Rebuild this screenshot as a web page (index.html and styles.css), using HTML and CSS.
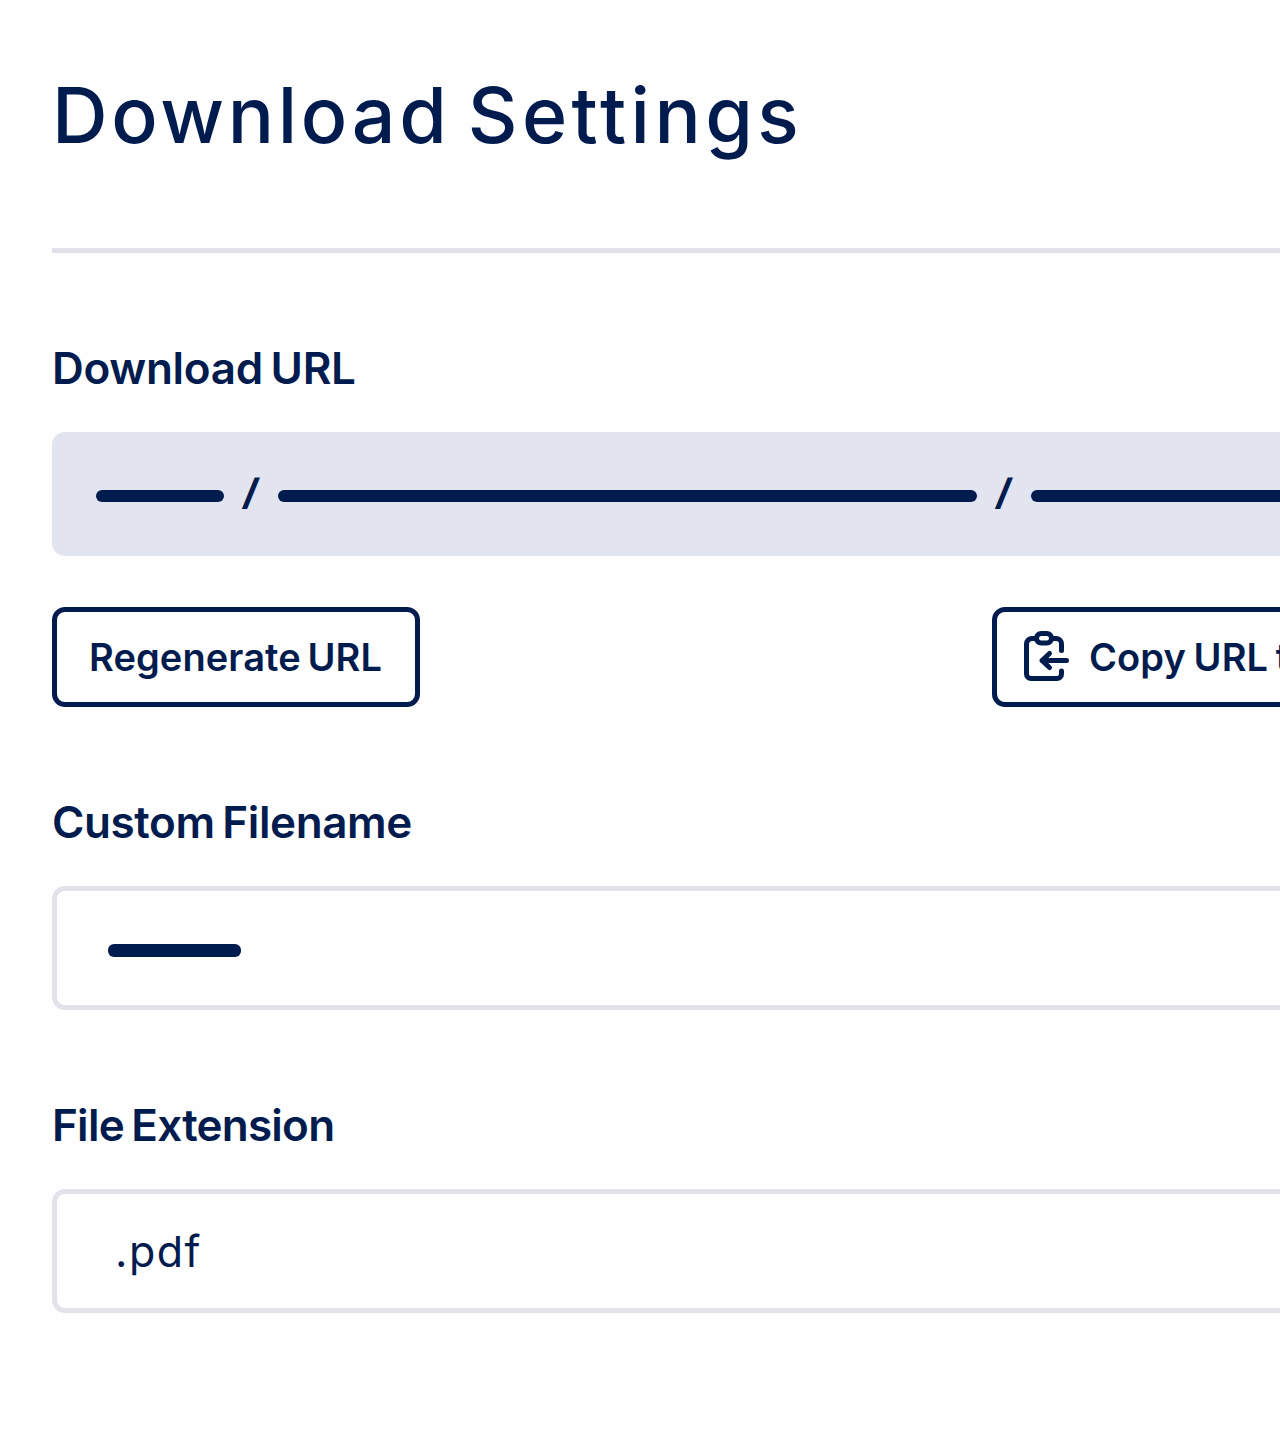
FILE: index.html
```
<!DOCTYPE html>
<html lang="en">
<head>
    <meta charset="UTF-8">
    <meta name="viewport" content="width=device-width, initial-scale=1.0">
    <title>Download Settings</title>
    <link rel="stylesheet" href="styles.css">
</head>
<body>

    <main class="settings">
        <h1 class="title"><span>Download</span> <span class="title-second">Settings</span></h1>

        <section class="field">
            <h2 class="label label-url">Download URL</h2>
            <div class="box box-filled">
                <span class="bar bar-host"></span>
                <span class="slash">/</span>
                <span class="bar bar-path"></span>
                <span class="slash">/</span>
                <span class="bar bar-file"></span>
            </div>
            <div class="actions">
                <button class="button button-regenerate" type="button">Regenerate URL</button>
                <button class="button button-copy" type="button">
                    <svg class="icon" width="50" height="56" viewBox="0 0 50 56">
                        <!-- Clipboard -->
                        <path d="M14.5 9.5H10A5.5 5.5 0 0 0 4.5 15v30a4.500 4.500 0 0 0 4.500 4.500h26a4.500 4.500 0 0 0 4.500-4.500v-3M39.500 21.500v-6.500A5.500 5.500 0 0 0 34 9.500h-4.500" />
                        <rect x="14.5" y="4.500" width="15" height="9.500" rx="4.750" />
                        <!-- Arrow -->
                        <path d="M44.500 31.500H20M27.500 24.500l-7.500 7 7.500 7" />
                    </svg>
                    <span>Copy URL to Clipboard</span>
                </button>
            </div>
        </section>

        <section class="field">
            <h2 class="label label-name">Custom Filename</h2>
            <div class="box">
                <span class="bar bar-name"></span>
            </div>
        </section>

        <section class="field">
            <h2 class="label label-extension">File Extension</h2>
            <div class="box box-extension">.pdf</div>
        </section>
    </main>

</body>
</html>
```
FILE: styles.css
```
* {
    box-sizing: border-box;
}
body {
    margin: 0;
    height: 1440px;
    overflow: hidden;
    background-color: #fefefe;
    color: #001b4e;
    font-family: Inter, "Open Sans", sans-serif;
}
.settings {
    width: 1584px;
    padding-left: 52px;
}
.title {
    height: 253px;
    margin: 0;
    padding-top: 67px;
    border-bottom: 5px solid #e2e2ea;
    font-size: 77px;
    font-weight: 450;
    line-height: 96px;
    letter-spacing: 3.7px;
    word-spacing: -7px;
}
.title-second {
    letter-spacing: 4.4px;
}
.field {
    padding-top: 87px;
}
.label {
    margin: 0 0 36px;
    font-size: 44px;
    font-weight: 600;
    line-height: 56px;
}
.label-url {
    letter-spacing: -0.3px;
    word-spacing: -3px;
}
.label-name {
    letter-spacing: -0.4px;
    word-spacing: -3px;
}
.label-extension {
    letter-spacing: -0.75px;
    word-spacing: -3px;
}
.box {
    display: flex;
    align-items: center;
    height: 124px;
    padding-left: 51px;
    border: 5px solid #e2e2ea;
    border-radius: 13px;
}
.box-filled {
    padding-left: 44px;
    border: none;
    background-color: #e2e5ef;
}
.box-extension {
    padding-left: 58px;
    font-size: 43px;
    letter-spacing: 1.5px;
}
.bar {
    flex: none;
    height: 12px;
    margin-top: 3px;
    border-radius: 6px;
    background-color: #001b4e;
}
.bar-host {
    width: 128px;
}
.bar-path {
    width: 699px;
}
.bar-file {
    width: 400px;
}
.bar-name {
    width: 133px;
    height: 13px;
    margin-top: 5px;
}
.slash {
    width: 54px;
    margin-top: -4px;
    text-align: center;
    font-size: 36px;
    font-weight: 800;
    transform: skewX(-8deg);
}
.actions {
    display: flex;
    justify-content: space-between;
    margin-top: 51px;
}
.button {
    display: flex;
    align-items: center;
    height: 100px;
    padding: 0;
    border: 5px solid #001b4e;
    border-radius: 13px;
    background: none;
    color: inherit;
    font-family: inherit;
    font-size: 38px;
    font-weight: 600;
    letter-spacing: 0.1px;
    word-spacing: -3px;
    white-space: nowrap;
}
.button-regenerate {
    width: 368px;
    padding-left: 32px;
}
.button-copy {
    width: 592px;
    gap: 17px;
    padding-left: 25px;
    word-spacing: -2px;
}
.icon {
    flex: none;
    fill: none;
    stroke: #001b4e;
    stroke-width: 5;
    stroke-linecap: round;
    stroke-linejoin: round;
}
```
